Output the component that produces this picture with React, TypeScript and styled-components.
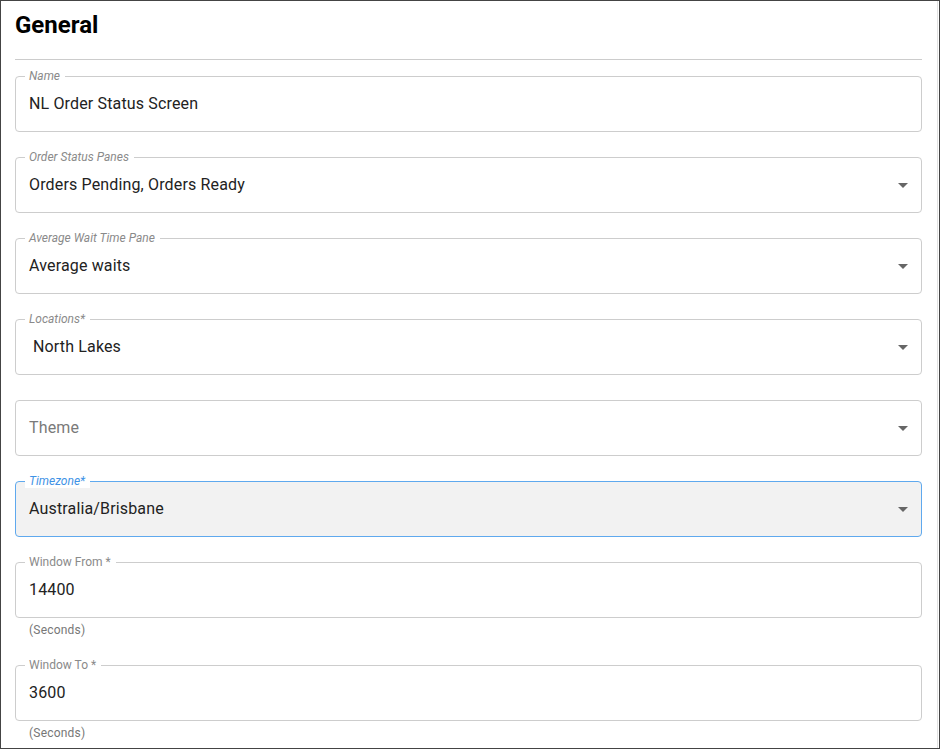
import styled, { createGlobalStyle } from 'styled-components';

const GlobalStyle = createGlobalStyle`
    html, body {
        margin: 0;
        padding: 0;
        background: #ffffff;
    }
    body {
        font-family: Roboto, "Liberation Sans", Arial, sans-serif;
    }
`;

type FieldProps = {
    label?: string;
    value?: string;
    placeholder?: string;
    italic?: boolean;
    select?: boolean;
    focused?: boolean;
    indent?: number;
    helper?: string;
};

const fields: FieldProps[] = [
    { label: 'Name', value: 'NL Order Status Screen', italic: true },
    { label: 'Order Status Panes', value: 'Orders Pending, Orders Ready', italic: true, select: true },
    { label: 'Average Wait Time Pane', value: 'Average waits', italic: true, select: true },
    { label: 'Locations*', value: 'North Lakes', italic: true, select: true, indent: 4 },
    { placeholder: 'Theme', select: true },
    { label: 'Timezone*', value: 'Australia/Brisbane', italic: true, select: true, focused: true },
    { label: 'Window From *', value: '14400', helper: '(Seconds)' },
    { label: 'Window To *', value: '3600', helper: '(Seconds)' },
];

const ArrowDrop = () => (
    <ArrowSvg viewBox="0 0 24 24" width={24} height={24}>
        <path d="M7 10l5 5 5-5z" fill="#666" />
    </ArrowSvg>
);

const Field = ({ label, value, placeholder, italic, select, focused, indent, helper }: FieldProps) => {
    return (
        <FieldGroup>
            <FieldBox $focused={focused}>
                {label && (
                    <FieldLabel $italic={italic} $focused={focused}>
                        {label}
                    </FieldLabel>
                )}
                {value ? (
                    <FieldValue $indent={indent}>{value}</FieldValue>
                ) : (
                    <Placeholder>{placeholder}</Placeholder>
                )}
                {select && <ArrowDrop />}
            </FieldBox>
            {helper && <HelperTxt>{helper}</HelperTxt>}
        </FieldGroup>
    );
};

const App = () => {
    return (
        <Frame>
            <GlobalStyle />
            <Page>
                <Title>General</Title>
                <Divider />
                <FieldList>
                    {fields.map((f, i) => (
                        <Field key={i} {...f} />
                    ))}
                </FieldList>
            </Page>
        </Frame>
    );
};

export default App;

const Frame = styled.div`
    width: 940px;
    height: 749px;
    box-sizing: border-box;
    border: 1px solid #444444;
    overflow: hidden;
    background: #ffffff;
`;

const Page = styled.div`
    width: 937px;
    height: 100%;
    box-sizing: border-box;
    border-right: 1px solid #e2e2e2;
    padding: 10px 14px 0 14px;
`;

const Title = styled.h2`
    margin: 0;
    font-size: 24px;
    line-height: 28px;
    font-weight: 700;
    color: #000000;
`;

const Divider = styled.div`
    margin-top: 20px;
    height: 1px;
    width: 907px;
    background: #cccccc;
`;

const FieldList = styled.div`
    margin-top: 16px;
    width: 907px;
    display: flex;
    flex-direction: column;
    gap: 25px;
`;

const FieldGroup = styled.div`
    display: flex;
    flex-direction: column;
`;

const FieldBox = styled.div<{ $focused?: boolean }>`
    position: relative;
    height: 56px;
    box-sizing: border-box;
    border: 1px solid ${(p) => (p.$focused ? '#5fa9ee' : '#cdcdcd')};
    border-radius: 4px;
    background: ${(p) => (p.$focused ? '#f2f2f2' : '#ffffff')};
    display: flex;
    align-items: center;
    padding: 0 40px 0 13px;
`;

const FieldLabel = styled.span<{ $italic?: boolean; $focused?: boolean }>`
    position: absolute;
    top: -8px;
    left: 9px;
    padding: 0 5px 0 4px;
    background: #ffffff;
    font-size: 12px;
    line-height: 14px;
    font-style: ${(p) => (p.$italic ? 'italic' : 'normal')};
    color: ${(p) => (p.$focused ? '#3f93e6' : '#8a8a8a')};
`;

const FieldValue = styled.span<{ $indent?: number }>`
    padding-left: ${(p) => p.$indent ?? 0}px;
    font-size: 16px;
    line-height: 20px;
    letter-spacing: 0.15px;
    color: #222222;
`;

const Placeholder = styled.span`
    font-size: 16px;
    line-height: 20px;
    letter-spacing: 0.15px;
    color: #7a7a7a;
`;

const ArrowSvg = styled.svg`
    position: absolute;
    right: 6px;
    top: 50%;
    transform: translateY(-50%);
`;

const HelperTxt = styled.p`
    margin: 2px 0 0 14px;
    font-size: 12px;
    line-height: 20px;
    letter-spacing: 0.2px;
    color: #777777;
`;
